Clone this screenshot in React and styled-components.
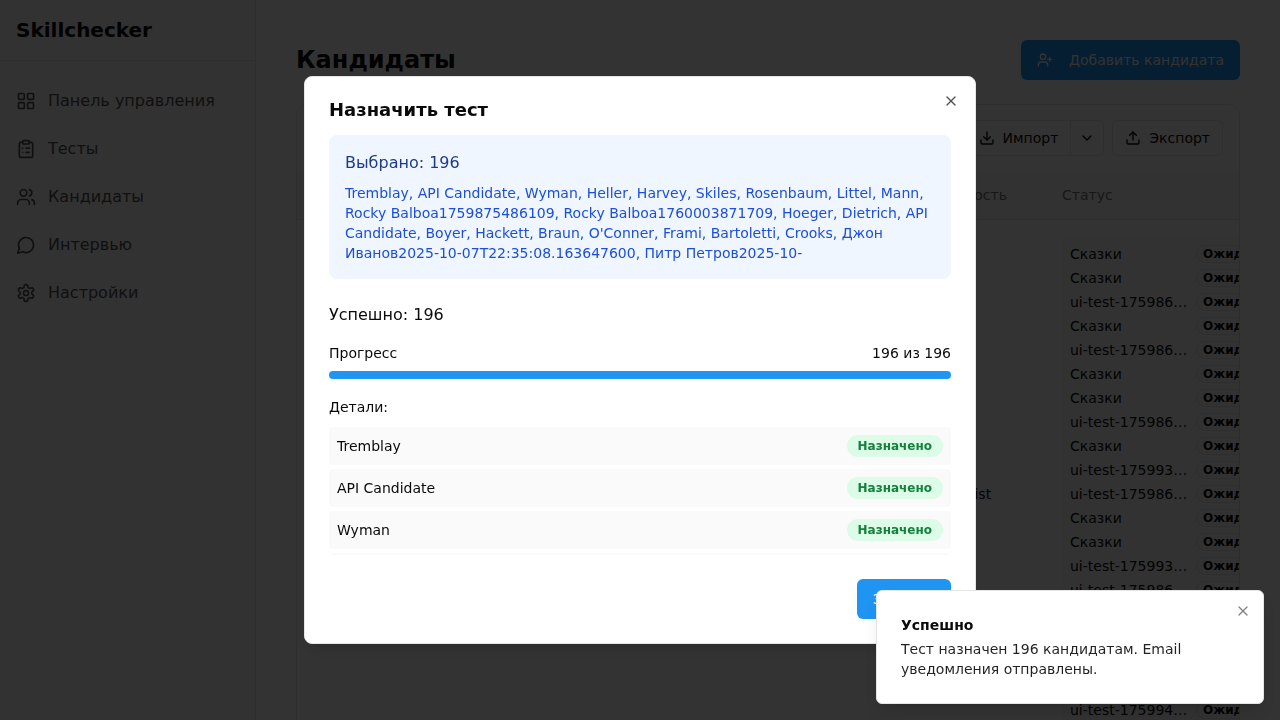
import React from "react";
import styled, { createGlobalStyle, css } from "styled-components";
import {
  LayoutGrid,
  ClipboardList,
  Users,
  UserPlus,
  Download,
  Upload,
  ChevronDown,
  X,
} from "lucide-react";

const c = {
  text: "#0a0a0a",
  muted: "#737373",
  border: "#e5e5e5",
  subtle: "#fafafa",
  primary: "#2094f3",
};

const GlobalStyle = createGlobalStyle`
  *, *::before, *::after { box-sizing: border-box; }
  body {
    margin: 0;
    overflow: hidden;
    background: #ffffff;
    color: ${c.text};
    font-family: "DejaVu Sans", sans-serif;
    font-size: 16px;
    line-height: 24px;
  }
  h1, h2, h3, p, ul { margin: 0; padding: 0; }
  ul { list-style: none; }
  button { font: inherit; color: inherit; cursor: pointer; }
  a { color: inherit; text-decoration: none; }
`;

const Shell = styled.div`
  display: flex;
  height: 100vh;
  overflow: hidden;
`;

const Sidebar = styled.aside`
  flex: none;
  width: 256px;
  background: ${c.subtle};
  border-right: 1px solid ${c.border};
`;

const Brand = styled.div`
  padding: 16px;
  border-bottom: 1px solid ${c.border};
  font-size: 20px;
  line-height: 28px;
  font-weight: 700;
`;

const Nav = styled.nav`
  display: flex;
  flex-direction: column;
  gap: 8px;
  padding: 20px 0;
`;

const NavLink = styled.a`
  display: flex;
  align-items: center;
  gap: 12px;
  height: 40px;
  padding: 0 16px;
  color: #525252;
`;

const StrokeIcon = styled.svg`
  width: 20px;
  height: 20px;
  fill: none;
  stroke: currentColor;
  stroke-width: 2;
  stroke-linecap: round;
  stroke-linejoin: round;
`;

const Main = styled.main`
  flex: 1;
  min-width: 0;
  padding: 40px;
`;

const PageHeader = styled.header`
  display: flex;
  align-items: center;
  justify-content: space-between;
  margin-bottom: 24px;
`;

const PageTitle = styled.h1`
  font-size: 24px;
  line-height: 32px;
  font-weight: 700;
`;

const PrimaryButton = styled.button`
  display: inline-flex;
  align-items: center;
  gap: 16px;
  height: 40px;
  padding: 0 16px;
  border: 0;
  border-radius: 6px;
  background: ${c.primary};
  color: #fafafa;
  font-size: 14px;
  line-height: 20px;
`;

const Card = styled.section`
  border: 1px solid ${c.border};
  border-radius: 12px;
  background: #ffffff;
  overflow: hidden;
`;

const Toolbar = styled.div`
  display: flex;
  justify-content: flex-end;
  gap: 8px;
  padding: 15px 16px;
`;

const OutlineButton = styled.button`
  display: inline-flex;
  align-items: center;
  gap: 8px;
  height: 36px;
  padding: 0 ${(p) => (p.$icon ? 8 : 12)}px;
  border: 1px solid ${c.border};
  border-radius: 6px;
  background: #ffffff;
  font-size: 14px;
  line-height: 20px;
`;

const ButtonGroup = styled.div`
  display: flex;
  & > :first-child {
    border-right: 0;
    border-radius: 6px 0 0 6px;
  }
  & > :last-child {
    border-radius: 0 6px 6px 0;
  }
`;

const Table = styled.table`
  width: calc(100% + 96px);
  table-layout: fixed;
  border-collapse: collapse;
  font-size: 14px;
  line-height: 20px;
`;

const HeadCell = styled.th`
  width: ${(p) => p.$width};
  height: 48px;
  padding: 0 16px;
  border-bottom: 1px solid ${c.border};
  background: ${c.subtle};
  color: ${c.muted};
  font-weight: 400;
  text-align: left;
`;

const Cell = styled.td`
  padding: 16px;
  vertical-align: middle;
`;

const TestList = styled.ul`
  display: flex;
  flex-direction: column;
  gap: 4px;
  padding: 8px;
  border-radius: 6px;
  background: ${c.subtle};
`;

const TestItem = styled.li`
  display: flex;
  align-items: center;
  gap: 6px;
  height: 20px;
`;

const TestName = styled.span`
  width: 120px;
  overflow: hidden;
  text-overflow: ellipsis;
  white-space: nowrap;
`;

const badge = css`
  display: inline-flex;
  border: 1px solid ${c.border};
  border-radius: 999px;
  font-size: 12px;
  line-height: 16px;
  font-weight: 700;
`;

const PendingBadge = styled.span`
  ${badge}
  padding: 0 6px;
`;

const AssignedBadge = styled.span`
  ${badge}
  padding: 2px 10px;
  border-color: transparent;
  background: #dcfce7;
  color: #15803d;
`;

const Overlay = styled.div`
  position: fixed;
  inset: 0;
  display: flex;
  align-items: center;
  justify-content: center;
  background: rgba(0, 0, 0, 0.8);
`;

const Dialog = styled.div`
  position: relative;
  width: 100%;
  max-width: 672px;
  padding: 24px;
  border: 1px solid ${c.border};
  border-radius: 8px;
  background: #ffffff;
  box-shadow: 0 10px 15px -3px rgba(0, 0, 0, 0.1), 0 4px 6px -4px rgba(0, 0, 0, 0.1);
`;

const CloseButton = styled.button`
  position: absolute;
  top: ${(p) => p.$inset}px;
  right: ${(p) => p.$inset}px;
  display: flex;
  padding: 0;
  border: 0;
  background: transparent;
  opacity: ${(p) => p.$opacity};
`;

const DialogTitle = styled.h2`
  margin-bottom: 16px;
  font-size: 18px;
  line-height: 18px;
  font-weight: 700;
`;

const Selection = styled.div`
  padding: 16px;
  margin-bottom: 24px;
  border-radius: 8px;
  background: #eff6ff;
`;

const SelectionTitle = styled.h3`
  margin-bottom: 8px;
  font-size: 16px;
  line-height: 24px;
  font-weight: 400;
  color: #1e3a8a;
`;

const SelectionNames = styled.p`
  max-height: 80px;
  overflow: hidden;
  font-size: 14px;
  line-height: 20px;
  color: #1d4ed8;
`;

const ProgressHeader = styled.div`
  display: flex;
  justify-content: space-between;
  margin: 16px 0 8px;
  font-size: 14px;
  line-height: 20px;
`;

const Progress = styled.div`
  height: 8px;
  margin-bottom: 16px;
  border-radius: 4px;
  background: ${c.primary};
`;

const DetailsTitle = styled.h3`
  margin-bottom: 8px;
  font-size: 14px;
  line-height: 24px;
  font-weight: 400;
`;

const Details = styled.ul`
  display: flex;
  flex-direction: column;
  gap: 4px;
  max-height: 128px;
  margin-bottom: 24px;
  overflow-y: auto;
  scrollbar-width: none;
`;

const DetailRow = styled.li`
  display: flex;
  flex: none;
  align-items: center;
  justify-content: space-between;
  padding: 8px;
  border-radius: 4px;
  background: ${c.subtle};
  font-size: 14px;
  line-height: 20px;
`;

const DialogFooter = styled.footer`
  display: flex;
  justify-content: flex-end;
`;

const Toast = styled.div`
  position: fixed;
  right: 16px;
  bottom: 16px;
  width: 388px;
  padding: 24px 48px 24px 24px;
  border: 1px solid ${c.border};
  border-radius: 6px;
  background: #ffffff;
  box-shadow: 0 10px 15px -3px rgba(0, 0, 0, 0.1), 0 4px 6px -4px rgba(0, 0, 0, 0.1);
  font-size: 14px;
  line-height: 20px;
`;

const ToastTitle = styled.h3`
  margin-bottom: 4px;
  font-size: 14px;
  line-height: 20px;
  font-weight: 700;
`;

const ToastText = styled.p`
  opacity: 0.9;
`;

function ChatIcon() {
  return (
    <StrokeIcon viewBox="0 0 24 24" aria-hidden="true">
      <path d="M7.9 20A9 9 0 1 0 4 16.1L2 22Z" />
    </StrokeIcon>
  );
}

function GearIcon() {
  return (
    <StrokeIcon viewBox="0 0 24 24" aria-hidden="true">
      <path d="M12.22 2h-.44a2 2 0 0 0-2 2v.18a2 2 0 0 1-1 1.73l-.43.25a2 2 0 0 1-2 0l-.15-.08a2 2 0 0 0-2.73.73l-.22.38a2 2 0 0 0 .73 2.73l.15.1a2 2 0 0 1 1 1.72v.51a2 2 0 0 1-1 1.74l-.15.09a2 2 0 0 0-.73 2.73l.22.38a2 2 0 0 0 2.73.73l.15-.08a2 2 0 0 1 2 0l.43.25a2 2 0 0 1 1 1.73V20a2 2 0 0 0 2 2h.44a2 2 0 0 0 2-2v-.18a2 2 0 0 1 1-1.73l.43-.25a2 2 0 0 1 2 0l.15.08a2 2 0 0 0 2.73-.73l.22-.39a2 2 0 0 0-.73-2.73l-.15-.08a2 2 0 0 1-1-1.74v-.5a2 2 0 0 1 1-1.74l.15-.09a2 2 0 0 0 .73-2.73l-.22-.38a2 2 0 0 0-2.73-.73l-.15.08a2 2 0 0 1-2 0l-.43-.25a2 2 0 0 1-1-1.73V4a2 2 0 0 0-2-2z" />
      <circle cx="12" cy="12" r="3" />
    </StrokeIcon>
  );
}

const navItems = [
  [LayoutGrid, "Панель управления"],
  [ClipboardList, "Тесты"],
  [Users, "Кандидаты"],
  [ChatIcon, "Интервью"],
  [GearIcon, "Настройки"],
];

const tests = [
  "Сказки",
  "Сказки",
  "ui-test-1759861204",
  "Сказки",
  "ui-test-1759864310",
  "Сказки",
  "Сказки",
  "ui-test-1759867725",
  "Сказки",
  "ui-test-1759931102",
  "ui-test-1759868841",
  "Сказки",
  "Сказки",
  "ui-test-1759934417",
  "ui-test-1759869950",
  "Сказки",
  "ui-test-1759936208",
  "Сказки",
  "ui-test-1759938816",
  "ui-test-1759941093",
  "Сказки",
];

const selected =
  "Tremblay, API Candidate, Wyman, Heller, Harvey, Skiles, Rosenbaum, Littel, Mann, Rocky Balboa1759875486109, Rocky Balboa1760003871709, Hoeger, Dietrich, API Candidate, Boyer, Hackett, Braun, O'Conner, Frami, Bartoletti, Crooks, Джон Иванов2025-10-07T22:35:08.163647600, Питр Петров2025-10-";

const assigned = ["Tremblay", "API Candidate", "Wyman", "Heller"];

export default function App() {
  return (
    <>
      <GlobalStyle />
      <Shell>
        <Sidebar>
          <Brand>Skillchecker</Brand>
          <Nav>
            {navItems.map(([Icon, label]) => (
              <NavLink key={label} href="#">
                <Icon size={20} />
                {label}
              </NavLink>
            ))}
          </Nav>
        </Sidebar>
        <Main>
          <PageHeader>
            <PageTitle>Кандидаты</PageTitle>
            <PrimaryButton type="button">
              <UserPlus size={16} />
              Добавить кандидата
            </PrimaryButton>
          </PageHeader>
          <Card>
            <Toolbar>
              <ButtonGroup>
                <OutlineButton type="button">
                  <Download size={16} />
                  Импорт
                </OutlineButton>
                <OutlineButton type="button" $icon aria-label="Варианты импорта">
                  <ChevronDown size={16} />
                </OutlineButton>
              </ButtonGroup>
              <OutlineButton type="button">
                <Upload size={16} />
                Экспорт
              </OutlineButton>
            </Toolbar>
            <Table>
              <thead>
                <tr>
                  <HeadCell as="td" $width="auto" />
                  <HeadCell $width="138px">Должность</HeadCell>
                  <HeadCell $width="289px">Статус</HeadCell>
                </tr>
              </thead>
              <tbody>
                <tr>
                  <Cell />
                  <Cell>Specialist</Cell>
                  <Cell>
                    <TestList>
                      {tests.map((name, i) => (
                        <TestItem key={i}>
                          <TestName>{name}</TestName>
                          <PendingBadge>Ожидает</PendingBadge>
                        </TestItem>
                      ))}
                    </TestList>
                  </Cell>
                </tr>
              </tbody>
            </Table>
          </Card>
        </Main>
      </Shell>

      <Overlay>
        <Dialog role="dialog" aria-modal="true" aria-labelledby="dialog-title">
          <DialogTitle id="dialog-title">Назначить тест</DialogTitle>
          <Selection>
            <SelectionTitle>Выбрано: 196</SelectionTitle>
            <SelectionNames>{selected}</SelectionNames>
          </Selection>
          <p>Успешно: 196</p>
          <ProgressHeader>
            <span>Прогресс</span>
            <span>196 из 196</span>
          </ProgressHeader>
          <Progress
            role="progressbar"
            aria-label="Прогресс"
            aria-valuenow={196}
            aria-valuemin={0}
            aria-valuemax={196}
          />
          <DetailsTitle>Детали:</DetailsTitle>
          <Details>
            {assigned.map((name) => (
              <DetailRow key={name}>
                {name}
                <AssignedBadge>Назначено</AssignedBadge>
              </DetailRow>
            ))}
          </Details>
          <DialogFooter>
            <PrimaryButton type="button">Закрыть</PrimaryButton>
          </DialogFooter>
          <CloseButton type="button" aria-label="Закрыть окно" $inset={16} $opacity={0.7}>
            <X size={16} />
          </CloseButton>
        </Dialog>
      </Overlay>

      <Toast role="status">
        <ToastTitle>Успешно</ToastTitle>
        <ToastText>Тест назначен 196 кандидатам. Email уведомления отправлены.</ToastText>
        <CloseButton type="button" aria-label="Закрыть уведомление" $inset={12} $opacity={0.5}>
          <X size={16} />
        </CloseButton>
      </Toast>
    </>
  );
}
